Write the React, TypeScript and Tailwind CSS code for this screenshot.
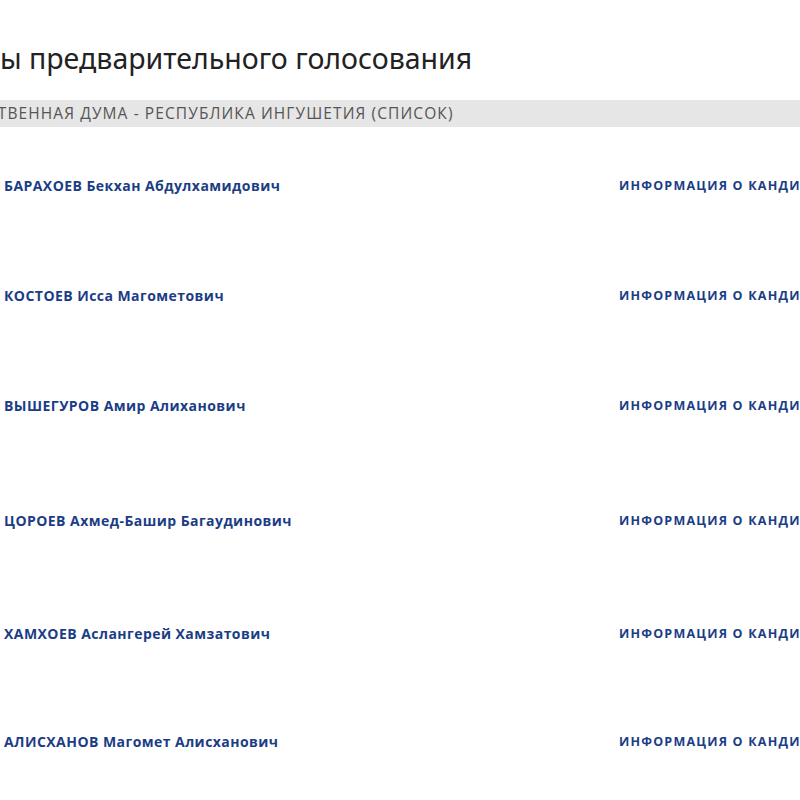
const candidates = [
  { name: 'БАРАХОЕВ Бекхан Абдулхамидович', h: 'h-[110px]' },
  { name: 'КОСТОЕВ Исса Магометович', h: 'h-[110px]' },
  { name: 'ВЫШЕГУРОВ Амир Алиханович', h: 'h-[115px]' },
  { name: 'ЦОРОЕВ Ахмед-Башир Багаудинович', h: 'h-[113px]' },
  { name: 'ХАМХОЕВ Аслангерей Хамзатович', h: 'h-[108px]' },
  { name: 'АЛИСХАНОВ Магомет Алисханович', h: 'h-[110px]' },
];

const App = () => {
  return (
    <div className="w-[800px] h-[800px] overflow-hidden bg-white" style={{ fontFamily: '"Open Sans", "Noto Sans", sans-serif' }}>
      <div className="ml-[-132px] w-[1100px]">
        {/* Title */}
        <h1 className="h-[100px] pt-[38px] text-[28.5px] leading-[40px] text-[#222] font-normal" style={{ fontFamily: '"Noto Sans", sans-serif' }}>
          Кандидаты предварительного голосования
        </h1>

        {/* Section bar */}
        <div className="ml-[38px] h-[27px] bg-[#e6e6e6] flex items-center">
          <span className="ml-[4px] mt-[1px] text-[15.5px] tracking-[1.1px] text-[#555] uppercase whitespace-nowrap">
            Государственная дума - Республика Ингушетия (список)
          </span>
        </div>

        {/* Candidate rows */}
        <div className="ml-[38px]">
          {candidates.map(c => (
            <div key={c.name} className={`flex items-start pt-[49px] ${c.h}`}>
              <div className="w-[98px] shrink-0" />
              <a className="w-[615px] shrink-0 text-[14px] leading-[20px] font-bold tracking-[0.45px] text-[#1b3d85] whitespace-nowrap">{c.name}</a>
              <a className="text-[12.5px] leading-[20px] font-bold tracking-[1.2px] text-[#1b3d85] uppercase whitespace-nowrap">
                Информация о кандидате
              </a>
            </div>
          ))}
        </div>
      </div>
    </div>
  );
};

export default App;
